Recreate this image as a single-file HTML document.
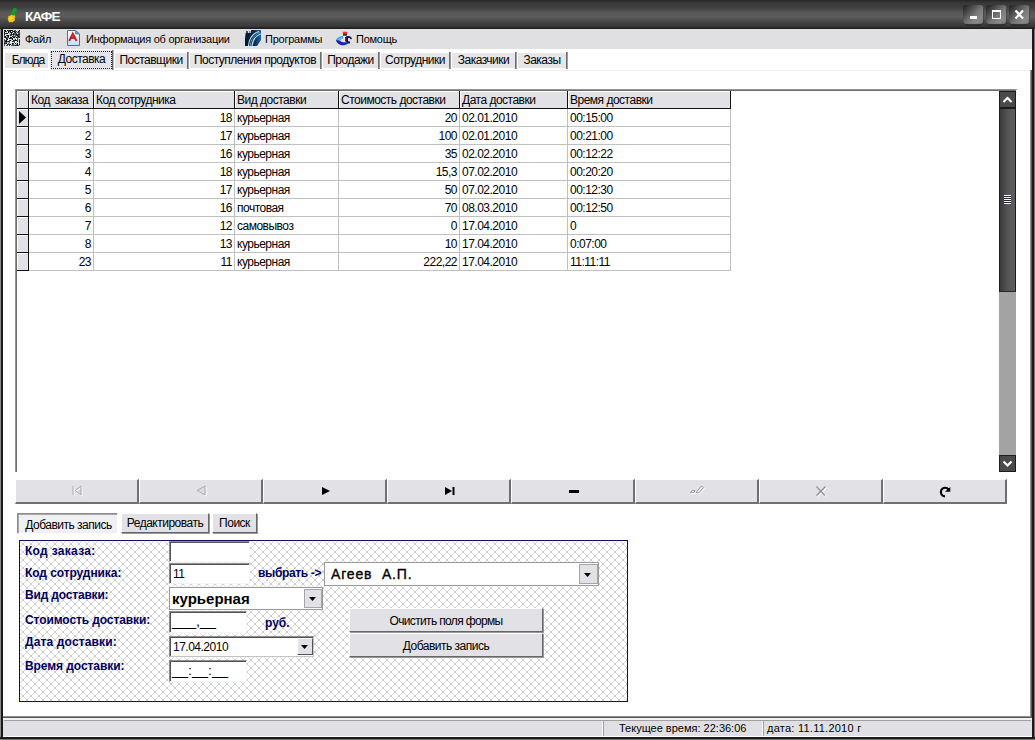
<!DOCTYPE html>
<html><head><meta charset="utf-8"><title>КАФЕ</title>
<style>
html,body{margin:0;padding:0;}
body{width:1035px;height:740px;position:relative;overflow:hidden;background:#fff;font-family:"Liberation Sans",sans-serif;font-size:11px;color:#000;}
.a{position:absolute;white-space:nowrap;}
#title{left:0;top:0;width:1035px;height:29px;background:linear-gradient(#242424 0px,#2c2c2c 1px,#383838 3px,#3e3e3e 7px,#4c4c4c 10px,#5a5a5a 13px,#5c5c5c 17px,#4e4e4e 20px,#424242 23px,#3a3a3a 26px,#2a2a2a 27.5px,#1e1e1e 28.5px,#1e1e1e 29px);}
#title .t{left:25px;top:9px;color:#fff;font-weight:bold;font-size:13.5px;letter-spacing:-.9px;}
#menubar{left:3px;top:29px;width:1029px;height:20px;background:#e0e0e3;}
.mi{top:33px;font-size:11px;line-height:13px;letter-spacing:-.25px;}
.cap{width:21px;height:21px;top:5px;background:linear-gradient(135deg,#242424 4%,#484848 25%,#787878 52%,#8a8a8a 74%,#707070 100%);border-radius:3px 3px 4px 3px;box-shadow:inset 0 -2px 1px #2c2c2c,inset -1px 0 0 #4a4a4a;}
.tab{top:53px;height:15px;background:#e6e6e8;line-height:15px;font-size:12px;letter-spacing:-.5px;}
.tsep{top:52px;width:1px;height:17px;background:#6e6e6e;box-shadow:1px 0 0 #9c9c9c;}
.hd{top:91px;height:17px;background:#e2e2e6;box-shadow:inset 1px 1px 0 #fff;border-right:1px solid #111;border-bottom:1px solid #111;line-height:19px;font-size:12px;box-sizing:content-box;letter-spacing:-.5px;}
.cell{height:17px;line-height:18px;font-size:12px;letter-spacing:-.5px;border-right:1px solid #c0c0c0;border-bottom:1px solid #c0c0c0;}
.ind{left:17px;width:11px;height:17px;background:#e2e2e6;border-right:1px solid #111;border-bottom:1px solid #111;box-shadow:inset 1px 1px 0 #fff;}
.nav{top:479px;height:22px;width:121px;background:#e2e2e6;border-right:2px solid #707070;border-bottom:2px solid #707070;border-left:1px solid #fff;border-top:1px solid #fff;}
.btn{background:#e2e2e6;border:1px solid;border-color:#fff #666 #666 #fff;box-shadow:1px 1px 0 #999;text-align:center;font-size:12px;letter-spacing:-.5px;}
.lbl{left:25px;color:#000060;font-weight:bold;font-size:12px;line-height:14px;}
.inp{background:#fff;border:1px solid;border-color:#8c8c8c #f4f4f4 #f4f4f4 #8c8c8c;box-shadow:inset 1px 1px 0 #555;font-size:12px;letter-spacing:-.5px;}
</style></head><body>
<div id="title" class="a"><div class="a t">КАФЕ</div>
<svg class="a" style="left:4px;top:6px" width="18" height="19" viewBox="0 0 18 19"><ellipse cx="10.2" cy="5.6" rx="2.3" ry="4" transform="rotate(22 10.2 5.6)" fill="#169a22"/><path d="M7.5 8.8 L9.5 9.6 L11 9.3 L11.2 11.5 L10.6 13 L11 14.5 L9.3 15.4 L8.4 16.6 L6.6 16 L5 16.4 L4.3 14.6 L3.6 13 L4.4 11.6 L4.3 10 L6 9.8 Z" fill="#f2c21c"/><circle cx="6.8" cy="12.2" r="1.6" fill="#ffd83a"/></svg>
<div class="a cap" style="left:963px">
<div class="a" style="left:7px;top:11px;width:7px;height:3px;background:#fff"></div>
</div>
<div class="a cap" style="left:986px">
<div class="a" style="left:6px;top:5px;width:7px;height:6px;border:1px solid #fff;border-top-width:2px;box-sizing:content-box"></div>
</div>
<div class="a cap" style="left:1009px">
<svg class="a" style="left:0;top:0" width="21" height="21"><path d="M6.5 5.5 L14 13.5 M14 5.5 L6.5 13.5" stroke="#fff" stroke-width="2.2" fill="none"/></svg>
</div>
</div>
<div id="menubar" class="a"></div>
<div class="a" style="left:0;top:29px;width:1px;height:711px;background:#8a8a8a"></div>
<div class="a" style="left:1px;top:29px;width:2px;height:711px;background:#1a1a1a"></div>
<div class="a" style="left:1032px;top:29px;width:2px;height:711px;background:#1a1a1a"></div>
<div class="a" style="left:1034px;top:29px;width:1px;height:711px;background:#777"></div>
<div class="a" style="left:1030px;top:70px;width:1px;height:647px;background:#909090"></div>
<div class="a" style="left:1031px;top:70px;width:1px;height:648px;background:#555"></div>
<svg class="a" style="left:4px;top:30px" width="16" height="16" viewBox="0 0 16 16"><rect width="16" height="16" fill="#4a525a"/><rect x="0" y="0" width="1" height="1" fill="#101418"/><rect x="1" y="0" width="1" height="1" fill="#101418"/><rect x="2" y="0" width="1" height="1" fill="#e8ece8"/><rect x="3" y="0" width="1" height="1" fill="#101418"/><rect x="5" y="0" width="1" height="1" fill="#101418"/><rect x="6" y="0" width="1" height="1" fill="#101418"/><rect x="7" y="0" width="1" height="1" fill="#000"/><rect x="8" y="0" width="1" height="1" fill="#000"/><rect x="9" y="0" width="1" height="1" fill="#cfd6d2"/><rect x="12" y="0" width="1" height="1" fill="#f4f6f4"/><rect x="13" y="0" width="1" height="1" fill="#cfd6d2"/><rect x="14" y="0" width="1" height="1" fill="#cfd6d2"/><rect x="15" y="0" width="1" height="1" fill="#101418"/><rect x="1" y="1" width="1" height="1" fill="#000"/><rect x="3" y="1" width="1" height="1" fill="#cfd6d2"/><rect x="4" y="1" width="1" height="1" fill="#000"/><rect x="6" y="1" width="1" height="1" fill="#000"/><rect x="7" y="1" width="1" height="1" fill="#f4f6f4"/><rect x="9" y="1" width="1" height="1" fill="#1c2228"/><rect x="10" y="1" width="1" height="1" fill="#101418"/><rect x="13" y="1" width="1" height="1" fill="#b8c4c0"/><rect x="14" y="1" width="1" height="1" fill="#1c2228"/><rect x="0" y="2" width="1" height="1" fill="#101418"/><rect x="1" y="2" width="1" height="1" fill="#f4f6f4"/><rect x="2" y="2" width="1" height="1" fill="#b8c4c0"/><rect x="3" y="2" width="1" height="1" fill="#f4f6f4"/><rect x="4" y="2" width="1" height="1" fill="#000"/><rect x="5" y="2" width="1" height="1" fill="#b8c4c0"/><rect x="6" y="2" width="1" height="1" fill="#1c2228"/><rect x="7" y="2" width="1" height="1" fill="#000"/><rect x="9" y="2" width="1" height="1" fill="#e8ece8"/><rect x="11" y="2" width="1" height="1" fill="#000"/><rect x="12" y="2" width="1" height="1" fill="#b8c4c0"/><rect x="0" y="3" width="1" height="1" fill="#1c2228"/><rect x="2" y="3" width="1" height="1" fill="#1c2228"/><rect x="3" y="3" width="1" height="1" fill="#000"/><rect x="4" y="3" width="1" height="1" fill="#e8ece8"/><rect x="5" y="3" width="1" height="1" fill="#b8c4c0"/><rect x="6" y="3" width="1" height="1" fill="#cfd6d2"/><rect x="7" y="3" width="1" height="1" fill="#1c2228"/><rect x="8" y="3" width="1" height="1" fill="#f4f6f4"/><rect x="9" y="3" width="1" height="1" fill="#1c2228"/><rect x="13" y="3" width="1" height="1" fill="#f4f6f4"/><rect x="0" y="4" width="1" height="1" fill="#101418"/><rect x="1" y="4" width="1" height="1" fill="#cfd6d2"/><rect x="2" y="4" width="1" height="1" fill="#cfd6d2"/><rect x="3" y="4" width="1" height="1" fill="#cfd6d2"/><rect x="4" y="4" width="1" height="1" fill="#e8ece8"/><rect x="5" y="4" width="1" height="1" fill="#b8c4c0"/><rect x="7" y="4" width="1" height="1" fill="#101418"/><rect x="9" y="4" width="1" height="1" fill="#000"/><rect x="12" y="4" width="1" height="1" fill="#000"/><rect x="14" y="4" width="1" height="1" fill="#1c2228"/><rect x="15" y="4" width="1" height="1" fill="#1c2228"/><rect x="1" y="5" width="1" height="1" fill="#e8ece8"/><rect x="3" y="5" width="1" height="1" fill="#101418"/><rect x="4" y="5" width="1" height="1" fill="#101418"/><rect x="5" y="5" width="1" height="1" fill="#cfd6d2"/><rect x="6" y="5" width="1" height="1" fill="#1c2228"/><rect x="8" y="5" width="1" height="1" fill="#cfd6d2"/><rect x="10" y="5" width="1" height="1" fill="#b8c4c0"/><rect x="13" y="5" width="1" height="1" fill="#101418"/><rect x="0" y="6" width="1" height="1" fill="#1c2228"/><rect x="1" y="6" width="1" height="1" fill="#101418"/><rect x="2" y="6" width="1" height="1" fill="#b8c4c0"/><rect x="4" y="6" width="1" height="1" fill="#000"/><rect x="5" y="6" width="1" height="1" fill="#e8ece8"/><rect x="6" y="6" width="1" height="1" fill="#b8c4c0"/><rect x="7" y="6" width="1" height="1" fill="#e8ece8"/><rect x="8" y="6" width="1" height="1" fill="#1c2228"/><rect x="12" y="6" width="1" height="1" fill="#b8c4c0"/><rect x="14" y="6" width="1" height="1" fill="#101418"/><rect x="1" y="7" width="1" height="1" fill="#101418"/><rect x="5" y="7" width="1" height="1" fill="#cfd6d2"/><rect x="6" y="7" width="1" height="1" fill="#000"/><rect x="7" y="7" width="1" height="1" fill="#101418"/><rect x="8" y="7" width="1" height="1" fill="#b8c4c0"/><rect x="9" y="7" width="1" height="1" fill="#101418"/><rect x="10" y="7" width="1" height="1" fill="#1c2228"/><rect x="11" y="7" width="1" height="1" fill="#b8c4c0"/><rect x="12" y="7" width="1" height="1" fill="#000"/><rect x="15" y="7" width="1" height="1" fill="#101418"/><rect x="0" y="8" width="1" height="1" fill="#f4f6f4"/><rect x="1" y="8" width="1" height="1" fill="#cfd6d2"/><rect x="2" y="8" width="1" height="1" fill="#000"/><rect x="4" y="8" width="1" height="1" fill="#b8c4c0"/><rect x="5" y="8" width="1" height="1" fill="#101418"/><rect x="6" y="8" width="1" height="1" fill="#101418"/><rect x="8" y="8" width="1" height="1" fill="#101418"/><rect x="9" y="8" width="1" height="1" fill="#cfd6d2"/><rect x="10" y="8" width="1" height="1" fill="#b8c4c0"/><rect x="11" y="8" width="1" height="1" fill="#f4f6f4"/><rect x="12" y="8" width="1" height="1" fill="#e8ece8"/><rect x="14" y="8" width="1" height="1" fill="#cfd6d2"/><rect x="15" y="8" width="1" height="1" fill="#f4f6f4"/><rect x="1" y="9" width="1" height="1" fill="#f4f6f4"/><rect x="3" y="9" width="1" height="1" fill="#000"/><rect x="4" y="9" width="1" height="1" fill="#e8ece8"/><rect x="5" y="9" width="1" height="1" fill="#e8ece8"/><rect x="6" y="9" width="1" height="1" fill="#cfd6d2"/><rect x="7" y="9" width="1" height="1" fill="#cfd6d2"/><rect x="8" y="9" width="1" height="1" fill="#101418"/><rect x="9" y="9" width="1" height="1" fill="#cfd6d2"/><rect x="10" y="9" width="1" height="1" fill="#cfd6d2"/><rect x="11" y="9" width="1" height="1" fill="#1c2228"/><rect x="12" y="9" width="1" height="1" fill="#f4f6f4"/><rect x="14" y="9" width="1" height="1" fill="#b8c4c0"/><rect x="2" y="10" width="1" height="1" fill="#000"/><rect x="3" y="10" width="1" height="1" fill="#cfd6d2"/><rect x="4" y="10" width="1" height="1" fill="#e8ece8"/><rect x="6" y="10" width="1" height="1" fill="#000"/><rect x="7" y="10" width="1" height="1" fill="#cfd6d2"/><rect x="8" y="10" width="1" height="1" fill="#f4f6f4"/><rect x="9" y="10" width="1" height="1" fill="#101418"/><rect x="10" y="10" width="1" height="1" fill="#1c2228"/><rect x="11" y="10" width="1" height="1" fill="#000"/><rect x="12" y="10" width="1" height="1" fill="#101418"/><rect x="14" y="10" width="1" height="1" fill="#cfd6d2"/><rect x="15" y="10" width="1" height="1" fill="#101418"/><rect x="1" y="11" width="1" height="1" fill="#101418"/><rect x="2" y="11" width="1" height="1" fill="#000"/><rect x="4" y="11" width="1" height="1" fill="#101418"/><rect x="5" y="11" width="1" height="1" fill="#1c2228"/><rect x="6" y="11" width="1" height="1" fill="#f4f6f4"/><rect x="7" y="11" width="1" height="1" fill="#cfd6d2"/><rect x="8" y="11" width="1" height="1" fill="#1c2228"/><rect x="11" y="11" width="1" height="1" fill="#f4f6f4"/><rect x="12" y="11" width="1" height="1" fill="#e8ece8"/><rect x="13" y="11" width="1" height="1" fill="#1c2228"/><rect x="14" y="11" width="1" height="1" fill="#cfd6d2"/><rect x="15" y="11" width="1" height="1" fill="#101418"/><rect x="3" y="12" width="1" height="1" fill="#b8c4c0"/><rect x="4" y="12" width="1" height="1" fill="#cfd6d2"/><rect x="6" y="12" width="1" height="1" fill="#e8ece8"/><rect x="7" y="12" width="1" height="1" fill="#f4f6f4"/><rect x="8" y="12" width="1" height="1" fill="#cfd6d2"/><rect x="9" y="12" width="1" height="1" fill="#f4f6f4"/><rect x="11" y="12" width="1" height="1" fill="#f4f6f4"/><rect x="12" y="12" width="1" height="1" fill="#b8c4c0"/><rect x="13" y="12" width="1" height="1" fill="#b8c4c0"/><rect x="14" y="12" width="1" height="1" fill="#f4f6f4"/><rect x="15" y="12" width="1" height="1" fill="#101418"/><rect x="0" y="13" width="1" height="1" fill="#000"/><rect x="2" y="13" width="1" height="1" fill="#101418"/><rect x="3" y="13" width="1" height="1" fill="#cfd6d2"/><rect x="5" y="13" width="1" height="1" fill="#b8c4c0"/><rect x="6" y="13" width="1" height="1" fill="#cfd6d2"/><rect x="7" y="13" width="1" height="1" fill="#cfd6d2"/><rect x="8" y="13" width="1" height="1" fill="#000"/><rect x="9" y="13" width="1" height="1" fill="#1c2228"/><rect x="10" y="13" width="1" height="1" fill="#f4f6f4"/><rect x="11" y="13" width="1" height="1" fill="#101418"/><rect x="12" y="13" width="1" height="1" fill="#cfd6d2"/><rect x="13" y="13" width="1" height="1" fill="#101418"/><rect x="14" y="13" width="1" height="1" fill="#e8ece8"/><rect x="1" y="14" width="1" height="1" fill="#cfd6d2"/><rect x="2" y="14" width="1" height="1" fill="#e8ece8"/><rect x="3" y="14" width="1" height="1" fill="#1c2228"/><rect x="5" y="14" width="1" height="1" fill="#1c2228"/><rect x="6" y="14" width="1" height="1" fill="#101418"/><rect x="7" y="14" width="1" height="1" fill="#cfd6d2"/><rect x="10" y="14" width="1" height="1" fill="#cfd6d2"/><rect x="11" y="14" width="1" height="1" fill="#b8c4c0"/><rect x="13" y="14" width="1" height="1" fill="#101418"/><rect x="14" y="14" width="1" height="1" fill="#cfd6d2"/><rect x="15" y="14" width="1" height="1" fill="#101418"/><rect x="1" y="15" width="1" height="1" fill="#e8ece8"/><rect x="4" y="15" width="1" height="1" fill="#f4f6f4"/><rect x="5" y="15" width="1" height="1" fill="#1c2228"/><rect x="6" y="15" width="1" height="1" fill="#f4f6f4"/><rect x="11" y="15" width="1" height="1" fill="#101418"/><rect x="13" y="15" width="1" height="1" fill="#000"/><rect x="15" y="15" width="1" height="1" fill="#b8c4c0"/></svg>
<svg class="a" style="left:67px;top:30px" width="13" height="16" viewBox="0 0 13 16"><defs><linearGradient id="dg" x1="0" y1="0" x2="0" y2="1"><stop offset="0" stop-color="#fff"/><stop offset="1" stop-color="#c4ddf6"/></linearGradient></defs><path d="M.5 .5 H8.5 L12.5 4 V15.5 H.5 Z" fill="url(#dg)" stroke="#4f6f94"/><path d="M8.5 .5 L12.5 4 H8.5 Z" fill="#6f93c4" stroke="#4f6f94" stroke-width=".6"/><path d="M2.2 11 L5.8 3.6 L9.6 11 M3.6 8.6 C5 7.6 7 7.6 8.6 9" stroke="#c21c24" stroke-width="1.9" fill="none"/></svg>
<svg class="a" style="left:245px;top:30px" width="16" height="16" viewBox="0 0 16 16"><defs><linearGradient id="xg" x1="0" y1="0" x2="1" y2="0"><stop offset="0" stop-color="#061426"/><stop offset=".6" stop-color="#0c2c50"/><stop offset="1" stop-color="#1c64a8"/></linearGradient></defs><path d="M1 0 H16 V10 L12 16 H0 V9 Z" fill="url(#xg)"/><path d="M3.5 16 C4 9 7 3.5 14 1.5 M7 16 C7.5 10 10 6 16 4" stroke="#bfe4f8" stroke-width="1.1" fill="none"/><path d="M5.2 16 C5.8 9.5 9 4.5 15 2.6" stroke="#5fb4e0" stroke-width=".8" fill="none"/><path d="M1 1 L3 3 M3 1 L1 3 M4 1 V3" stroke="#e8f4ff" stroke-width=".7" fill="none" opacity=".0"/><rect x="0" y="0" width="6" height="4" fill="#e2e2e6" opacity=".0"/><path d="M0 0 H6 V3 H0 Z" fill="#e2e2e6"/><path d="M1 .8 L3 3 M3 .8 L1 3 M4 2 H5.6" stroke="#0a1a30" stroke-width=".8" fill="none"/></svg>
<svg class="a" style="left:335px;top:30px" width="18" height="16" viewBox="0 0 18 16"><path d="M7.6 1 L8.8 2.4 L9.8 1.2 L10.8 2.4 L12.2 1.2 L12 4.6 H8 Z" fill="#e4241c"/><path d="M8 4.2 H12 V5.6 H8 Z" fill="#241210"/><path d="M1 10 C2 7.6 5.5 6 8.4 6 L8.6 8.4 C6.6 8.6 5.4 9.4 5 10.6 Z" fill="#3c9cf4"/><path d="M1 10 L5 10.6 C5.6 12 7.6 12.6 9 12.2 L13.4 12.6 C12.6 15.2 8.4 16 5.2 14.8 C2.8 14 1.2 12 1 10 Z" fill="#1426b4"/><path d="M3 9.4 C4.4 8 6.4 7.2 8.4 7.2 L8.5 8.4 C6.4 8.6 5.2 9.4 4.8 10.4 Z" fill="#6cc0fc"/><path d="M11 6.4 C14 5.4 16.6 6.6 17 9 L15.4 9.2 C15 8 14 7.8 13 8.2 V11.2 L15 11.4 V13.4 C12.5 13.6 10.6 12.6 10.4 10 Z" fill="#0c1264"/><path d="M8.2 6 H10.4 V12 H8.8 Z" fill="#f0ecec"/><path d="M10 7 H11.6 V11.6 H10 Z" fill="#50261c"/></svg>
<div class="a mi" style="left:25px">Файл</div>
<div class="a mi" style="left:86px">Информация об организации</div>
<div class="a mi" style="left:265px">Программы</div>
<div class="a mi" style="left:356px">Помощь</div>
<div class="a tab" style="left:5px;width:43px;text-align:center;letter-spacing:-.9px;text-indent:3px;">Блюда</div>
<div class="a" style="left:50px;top:50px;width:62px;height:20px;background:#e4e4ea;"></div>
<div class="a" style="left:112px;top:50px;width:1px;height:20px;background:#666;box-shadow:1px 0 0 #bbb"></div>
<div class="a" style="left:51px;top:51px;width:59px;height:16px;border:1px dotted #222;line-height:14px;font-size:12px;letter-spacing:-.5px;text-align:center">Доставка</div>
<div class="a tab" style="left:115px;width:72px;text-align:center;">Поставщики</div>
<div class="a tsep" style="left:187px"></div>
<div class="a tab" style="left:190px;width:130px;text-align:center;">Поступления продуктов</div>
<div class="a tsep" style="left:320px"></div>
<div class="a tab" style="left:323px;width:55px;text-align:center;">Продажи</div>
<div class="a tsep" style="left:378px"></div>
<div class="a tab" style="left:381px;width:68px;text-align:center;">Сотрудники</div>
<div class="a tsep" style="left:449px"></div>
<div class="a tab" style="left:452px;width:63px;text-align:center;">Заказчики</div>
<div class="a tsep" style="left:515px"></div>
<div class="a tab" style="left:518px;width:48px;text-align:center;">Заказы</div>
<div class="a tsep" style="left:566px"></div>
<div class="a" style="left:4px;top:70px;width:1026px;height:1px;background:#f1f1f1"></div>
<div class="a" style="left:15px;top:89px;width:1002px;height:1px;background:#949494"></div>
<div class="a" style="left:15px;top:90px;width:1001px;height:1px;background:#6e6e6e"></div>
<div class="a" style="left:15px;top:89px;width:1px;height:383px;background:#949494"></div>
<div class="a" style="left:16px;top:90px;width:1px;height:382px;background:#6e6e6e"></div>
<div class="a ind" style="top:91px"></div>
<div class="a hd" style="left:29px;width:62px;padding-left:2px"><span class="hx" style="word-spacing:2px">Код заказа</span></div>
<div class="a hd" style="left:94px;width:138px;padding-left:2px"><span class="hx">Код сотрудника</span></div>
<div class="a hd" style="left:235px;width:101px;padding-left:2px"><span class="hx">Вид доставки</span></div>
<div class="a hd" style="left:339px;width:118px;padding-left:2px"><span class="hx">Стоимость доставки</span></div>
<div class="a hd" style="left:460px;width:105px;padding-left:2px"><span class="hx">Дата доставки</span></div>
<div class="a hd" style="left:568px;width:160px;padding-left:2px"><span class="hx">Время доставки</span></div>
<div class="a ind" style="top:109px"></div>
<div class="a cell" style="left:29px;top:109px;width:62px;padding-right:2px;text-align:right"><span class="cx">1</span></div>
<div class="a cell" style="left:94px;top:109px;width:138px;padding-right:2px;text-align:right"><span class="cx">18</span></div>
<div class="a cell" style="left:235px;top:109px;width:101px;padding-left:2px"><span class="cx">курьерная</span></div>
<div class="a cell" style="left:339px;top:109px;width:118px;padding-right:2px;text-align:right"><span class="cx">20</span></div>
<div class="a cell" style="left:460px;top:109px;width:105px;padding-left:2px"><span class="cx">02.01.2010</span></div>
<div class="a cell" style="left:568px;top:109px;width:160px;padding-left:2px"><span class="cx">00:15:00</span></div>
<div class="a ind" style="top:127px"></div>
<div class="a cell" style="left:29px;top:127px;width:62px;padding-right:2px;text-align:right"><span class="cx">2</span></div>
<div class="a cell" style="left:94px;top:127px;width:138px;padding-right:2px;text-align:right"><span class="cx">17</span></div>
<div class="a cell" style="left:235px;top:127px;width:101px;padding-left:2px"><span class="cx">курьерная</span></div>
<div class="a cell" style="left:339px;top:127px;width:118px;padding-right:2px;text-align:right"><span class="cx">100</span></div>
<div class="a cell" style="left:460px;top:127px;width:105px;padding-left:2px"><span class="cx">02.01.2010</span></div>
<div class="a cell" style="left:568px;top:127px;width:160px;padding-left:2px"><span class="cx">00:21:00</span></div>
<div class="a ind" style="top:145px"></div>
<div class="a cell" style="left:29px;top:145px;width:62px;padding-right:2px;text-align:right"><span class="cx">3</span></div>
<div class="a cell" style="left:94px;top:145px;width:138px;padding-right:2px;text-align:right"><span class="cx">16</span></div>
<div class="a cell" style="left:235px;top:145px;width:101px;padding-left:2px"><span class="cx">курьерная</span></div>
<div class="a cell" style="left:339px;top:145px;width:118px;padding-right:2px;text-align:right"><span class="cx">35</span></div>
<div class="a cell" style="left:460px;top:145px;width:105px;padding-left:2px"><span class="cx">02.02.2010</span></div>
<div class="a cell" style="left:568px;top:145px;width:160px;padding-left:2px"><span class="cx">00:12:22</span></div>
<div class="a ind" style="top:163px"></div>
<div class="a cell" style="left:29px;top:163px;width:62px;padding-right:2px;text-align:right"><span class="cx">4</span></div>
<div class="a cell" style="left:94px;top:163px;width:138px;padding-right:2px;text-align:right"><span class="cx">18</span></div>
<div class="a cell" style="left:235px;top:163px;width:101px;padding-left:2px"><span class="cx">курьерная</span></div>
<div class="a cell" style="left:339px;top:163px;width:118px;padding-right:2px;text-align:right"><span class="cx">15,3</span></div>
<div class="a cell" style="left:460px;top:163px;width:105px;padding-left:2px"><span class="cx">07.02.2010</span></div>
<div class="a cell" style="left:568px;top:163px;width:160px;padding-left:2px"><span class="cx">00:20:20</span></div>
<div class="a ind" style="top:181px"></div>
<div class="a cell" style="left:29px;top:181px;width:62px;padding-right:2px;text-align:right"><span class="cx">5</span></div>
<div class="a cell" style="left:94px;top:181px;width:138px;padding-right:2px;text-align:right"><span class="cx">17</span></div>
<div class="a cell" style="left:235px;top:181px;width:101px;padding-left:2px"><span class="cx">курьерная</span></div>
<div class="a cell" style="left:339px;top:181px;width:118px;padding-right:2px;text-align:right"><span class="cx">50</span></div>
<div class="a cell" style="left:460px;top:181px;width:105px;padding-left:2px"><span class="cx">07.02.2010</span></div>
<div class="a cell" style="left:568px;top:181px;width:160px;padding-left:2px"><span class="cx">00:12:30</span></div>
<div class="a ind" style="top:199px"></div>
<div class="a cell" style="left:29px;top:199px;width:62px;padding-right:2px;text-align:right"><span class="cx">6</span></div>
<div class="a cell" style="left:94px;top:199px;width:138px;padding-right:2px;text-align:right"><span class="cx">16</span></div>
<div class="a cell" style="left:235px;top:199px;width:101px;padding-left:2px"><span class="cx">почтовая</span></div>
<div class="a cell" style="left:339px;top:199px;width:118px;padding-right:2px;text-align:right"><span class="cx">70</span></div>
<div class="a cell" style="left:460px;top:199px;width:105px;padding-left:2px"><span class="cx">08.03.2010</span></div>
<div class="a cell" style="left:568px;top:199px;width:160px;padding-left:2px"><span class="cx">00:12:50</span></div>
<div class="a ind" style="top:217px"></div>
<div class="a cell" style="left:29px;top:217px;width:62px;padding-right:2px;text-align:right"><span class="cx">7</span></div>
<div class="a cell" style="left:94px;top:217px;width:138px;padding-right:2px;text-align:right"><span class="cx">12</span></div>
<div class="a cell" style="left:235px;top:217px;width:101px;padding-left:2px"><span class="cx">самовывоз</span></div>
<div class="a cell" style="left:339px;top:217px;width:118px;padding-right:2px;text-align:right"><span class="cx">0</span></div>
<div class="a cell" style="left:460px;top:217px;width:105px;padding-left:2px"><span class="cx">17.04.2010</span></div>
<div class="a cell" style="left:568px;top:217px;width:160px;padding-left:2px"><span class="cx">0</span></div>
<div class="a ind" style="top:235px"></div>
<div class="a cell" style="left:29px;top:235px;width:62px;padding-right:2px;text-align:right"><span class="cx">8</span></div>
<div class="a cell" style="left:94px;top:235px;width:138px;padding-right:2px;text-align:right"><span class="cx">13</span></div>
<div class="a cell" style="left:235px;top:235px;width:101px;padding-left:2px"><span class="cx">курьерная</span></div>
<div class="a cell" style="left:339px;top:235px;width:118px;padding-right:2px;text-align:right"><span class="cx">10</span></div>
<div class="a cell" style="left:460px;top:235px;width:105px;padding-left:2px"><span class="cx">17.04.2010</span></div>
<div class="a cell" style="left:568px;top:235px;width:160px;padding-left:2px"><span class="cx">0:07:00</span></div>
<div class="a ind" style="top:253px"></div>
<div class="a cell" style="left:29px;top:253px;width:62px;padding-right:2px;text-align:right"><span class="cx">23</span></div>
<div class="a cell" style="left:94px;top:253px;width:138px;padding-right:2px;text-align:right"><span class="cx">11</span></div>
<div class="a cell" style="left:235px;top:253px;width:101px;padding-left:2px"><span class="cx">курьерная</span></div>
<div class="a cell" style="left:339px;top:253px;width:118px;padding-right:2px;text-align:right"><span class="cx">222,22</span></div>
<div class="a cell" style="left:460px;top:253px;width:105px;padding-left:2px"><span class="cx">17.04.2010</span></div>
<div class="a cell" style="left:568px;top:253px;width:160px;padding-left:2px"><span class="cx">11:11:11</span></div>
<svg class="a" style="left:19px;top:111px" width="8" height="13"><path d="M0 0 L7 6.5 L0 13 Z" fill="#000"/></svg>
<div class="a" style="left:999px;top:91px;width:17px;height:381px;background:#a3a3a3"></div>
<div class="a" style="left:999px;top:91px;width:15px;height:15px;background:#4a4a4a;border:1px solid #1c1c1c;border-bottom:2px solid #1c1c1c"></div>
<svg class="a" style="left:999px;top:91px" width="17" height="17"><path d="M4.5 11 L8.5 7 L12.5 11" stroke="#fff" stroke-width="2.2" fill="none"/></svg>
<div class="a" style="left:999px;top:109px;width:15px;height:182px;background:linear-gradient(90deg,#3a3a3a,#545454 50%,#5e5e5e);border-left:1px solid #1c1c1c;border-right:1px solid #1c1c1c;border-bottom:1px solid #2a2a2a"></div>
<div class="a" style="left:1004px;top:195px;width:7px;height:9px;background:repeating-linear-gradient(#fff 0,#fff 1px,#223 1px,#223 2px)"></div>
<div class="a" style="left:999px;top:455px;width:15px;height:15px;background:#4a4a4a;border:1px solid #1c1c1c"></div>
<svg class="a" style="left:999px;top:455px" width="17" height="17"><path d="M4.5 6.5 L8.5 10.5 L12.5 6.5" stroke="#fff" stroke-width="2.2" fill="none"/></svg>
<div class="a nav" style="left:15px"><svg class="a" style="left:0;top:0" width="122" height="22"><path d="M57 6 V15 M65 6 L59 10.5 L65 15 Z" stroke="#fff" stroke-width="1" fill="#d8d8dc" transform="translate(1,1)"/><path d="M57 6 V15 M65 6 L59 10.5 L65 15 Z" stroke="#aaa" stroke-width="1" fill="none"/></svg></div>
<div class="a nav" style="left:139px"><svg class="a" style="left:0;top:0" width="122" height="22"><path d="M65 6 L57 10.5 L65 15 Z" stroke="#fff" stroke-width="1" fill="none" transform="translate(1,1)"/><path d="M65 6 L57 10.5 L65 15 Z" stroke="#aaa" stroke-width="1" fill="#dcdce0"/></svg></div>
<div class="a nav" style="left:263px"><svg class="a" style="left:0;top:0" width="122" height="22"><path d="M58 7 L66 11 L58 15 Z" fill="#000"/></svg></div>
<div class="a nav" style="left:387px"><svg class="a" style="left:0;top:0" width="122" height="22"><path d="M57 7 L64 11 L57 15 Z M64.5 7 H66.5 V15 H64.5 Z" fill="#000"/></svg></div>
<div class="a nav" style="left:511px"><svg class="a" style="left:0;top:0" width="122" height="22"><rect x="57" y="10" width="10" height="3" fill="#000"/></svg></div>
<div class="a nav" style="left:635px"><svg class="a" style="left:0;top:0" width="122" height="22"><path d="M54.5 12.5 L56 10.5 L59 10.5 L58 12.5 Z M60 12.5 L65.5 6 L67.5 7.5 L62.5 13 Z" stroke="#fff" stroke-width="1" fill="none" transform="translate(1,1)"/><path d="M54.5 12.5 L56 10.5 L59 10.5 L58 12.5 Z M60 12.5 L65.5 6 L67.5 7.5 L62.5 13 Z" stroke="#9a9a9a" stroke-width="1" fill="none"/></svg></div>
<div class="a nav" style="left:759px"><svg class="a" style="left:0;top:0" width="122" height="22"><path d="M56.5 6.5 L65 15.5 M65.5 6.5 L56.5 15.5" stroke="#fff" stroke-width="1.2" fill="none" transform="translate(1.3,1)"/><path d="M56.5 6.5 L65 15.5 M65.5 6.5 L56.5 15.5" stroke="#8a8a8a" stroke-width="1.1" fill="none"/></svg></div>
<div class="a nav" style="left:883px"><svg class="a" style="left:0;top:0" width="122" height="22"><path d="M61 16.4 A4.3 4.3 0 1 1 64.6 9.6" stroke="#000" stroke-width="2.1" fill="none"/><path d="M66.3 7 V11.8 H61 Z" fill="#000"/></svg></div>
<div class="a" style="left:17px;top:513px;width:99px;height:19px;background:#f0f0f2;border:1px solid;border-color:#8c8c8c #fff #fff #8c8c8c;box-shadow:inset 1px 1px 0 #a8a8a8;line-height:20px;text-align:center;font-size:12px;letter-spacing:-.5px"><span style="position:relative;left:1px;top:1px">Добавить запись</span></div>
<div class="a btn" style="left:121px;top:513px;width:86px;height:18px;line-height:19px">Редактировать</div>
<div class="a btn" style="left:212px;top:513px;width:43px;height:18px;line-height:19px">Поиск</div>
<svg class="a" style="left:20px;top:541px" width="607" height="160" shape-rendering="crispEdges"><defs><pattern id="hp" width="8" height="8" x="3" y="3" patternUnits="userSpaceOnUse"><rect x="0" y="0" width="1" height="1" fill="#cccccd"/><rect x="0" y="7" width="1" height="1" fill="#cccccd"/><rect x="1" y="1" width="1" height="1" fill="#dadadc"/><rect x="1" y="6" width="1" height="1" fill="#dadadc"/><rect x="2" y="2" width="1" height="1" fill="#dadadc"/><rect x="2" y="5" width="1" height="1" fill="#dadadc"/><rect x="3" y="3" width="1" height="1" fill="#cccccd"/><rect x="3" y="4" width="1" height="1" fill="#cccccd"/><rect x="4" y="3" width="1" height="1" fill="#cccccd"/><rect x="4" y="4" width="1" height="1" fill="#cccccd"/><rect x="5" y="2" width="1" height="1" fill="#dadadc"/><rect x="5" y="5" width="1" height="1" fill="#dadadc"/><rect x="6" y="1" width="1" height="1" fill="#dadadc"/><rect x="6" y="6" width="1" height="1" fill="#dadadc"/><rect x="7" y="0" width="1" height="1" fill="#cccccd"/><rect x="7" y="7" width="1" height="1" fill="#cccccd"/></pattern></defs><rect width="607" height="160" fill="#fff"/><rect width="607" height="160" fill="url(#hp)"/></svg>
<div class="a" style="left:19px;top:540px;width:607px;height:160px;border:1px solid #101060"></div>
<div class="a lbl" style="top:544px;letter-spacing:0.3px">Код заказа:</div>
<div class="a lbl" style="top:566px;letter-spacing:-0.08px">Код сотрудника:</div>
<div class="a lbl" style="top:588px;letter-spacing:-0.18px">Вид доставки:</div>
<div class="a lbl" style="top:613px;letter-spacing:-0.1px">Стоимость доставки:</div>
<div class="a lbl" style="top:635px;letter-spacing:0.14px">Дата доставки:</div>
<div class="a lbl" style="top:659px;letter-spacing:-0.07px">Время доставки:</div>
<div class="a inp" style="left:169px;top:541px;width:79px;height:19px"></div>
<div class="a inp" style="left:169px;top:563px;width:79px;height:19px;line-height:21px;text-indent:3px">11</div>
<div class="a lbl" style="left:258px;top:566px;letter-spacing:-.35px">выбрать -&gt;</div>
<div class="a" style="left:324px;top:562px;width:273px;height:22px;background:#fff;border:1px solid #9a9a9a;line-height:22px;font-size:14px;text-indent:6px;letter-spacing:.85px;-webkit-text-stroke:.35px #000">Агеев&nbsp; А.П.</div>
<div class="a" style="left:579px;top:564px;width:17px;height:18px;background:#e2e2e6;border:1px solid #a4a4a4"></div>
<svg class="a" style="left:584px;top:573px" width="7" height="4"><path d="M0 0 H7 L3.5 4 Z" fill="#000"/></svg>
<div class="a" style="left:169px;top:587px;width:152px;height:21px;background:#fff;border:1px solid #9a9a9a;line-height:21px;font-size:15px;font-weight:bold;text-indent:2px;letter-spacing:0">курьерная</div>
<div class="a" style="left:304px;top:589px;width:16px;height:17px;background:#e2e2e6;border:1px solid #a4a4a4"></div>
<svg class="a" style="left:309px;top:597px" width="7" height="4"><path d="M0 0 H7 L3.5 4 Z" fill="#000"/></svg>
<div class="a inp" style="left:169px;top:611px;width:76px;height:20px;line-height:20px;letter-spacing:0"><span style="display:inline-block;transform:scaleX(1.2);transform-origin:0 0;margin-left:2px">___,__</span></div>
<div class="a lbl" style="left:265px;top:616px">руб.</div>
<div class="a inp" style="left:169px;top:636px;width:143px;height:19px;line-height:21px;text-indent:3px;border-bottom-color:#c4c4c4;border-right-color:#c4c4c4">17.04.2010</div>
<div class="a" style="left:297px;top:638px;width:14px;height:15px;background:#e2e2e6;border:1px solid;border-color:#fff #555 #555 #fff"></div>
<svg class="a" style="left:301px;top:645px" width="7" height="4"><path d="M0 0 H7 L3.5 4 Z" fill="#000"/></svg>
<div class="a inp" style="left:169px;top:660px;width:76px;height:20px;line-height:20px;letter-spacing:0"><span style="display:inline-block;transform:scaleX(1.2);transform-origin:0 0;margin-left:2px">__:__:__</span></div>
<div class="a btn" style="left:349px;top:608px;width:192px;height:22px;line-height:24px;letter-spacing:-.65px">Очистить поля формы</div>
<div class="a btn" style="left:349px;top:633px;width:192px;height:22px;line-height:24px">Добавить запись</div>
<div class="a" style="left:3px;top:716px;width:1028px;height:1px;background:#909090"></div>
<div class="a" style="left:3px;top:717px;width:1029px;height:1px;background:#555"></div>
<div class="a" style="left:3px;top:718px;width:1029px;height:18px;background:#e0e0e4"></div>
<div class="a" style="left:3px;top:718px;width:1029px;height:2px;background:#f2f2f4"></div>
<div class="a" style="left:4px;top:720px;width:1027px;height:1px;background:#a0a0a0"></div>
<div class="a" style="left:3px;top:736px;width:1029px;height:1px;background:#fff"></div>
<div class="a" style="left:0px;top:737px;width:1035px;height:2px;background:#1a1a1a"></div>
<div class="a" style="left:0px;top:739px;width:1035px;height:1px;background:#777"></div>
<div class="a" style="left:603px;top:721px;width:1px;height:15px;background:#a0a0a0;box-shadow:-1px 0 0 #fff"></div>
<div class="a" style="left:763px;top:721px;width:1px;height:15px;background:#a0a0a0;box-shadow:-1px 0 0 #fff"></div>
<div class="a" style="left:619px;top:722px;font-size:11px;line-height:13px">Текущее время: 22:36:06</div>
<div class="a" style="left:767px;top:722px;font-size:11px;line-height:13px;letter-spacing:.25px">дата: 11.11.2010 г</div>
</body></html>
